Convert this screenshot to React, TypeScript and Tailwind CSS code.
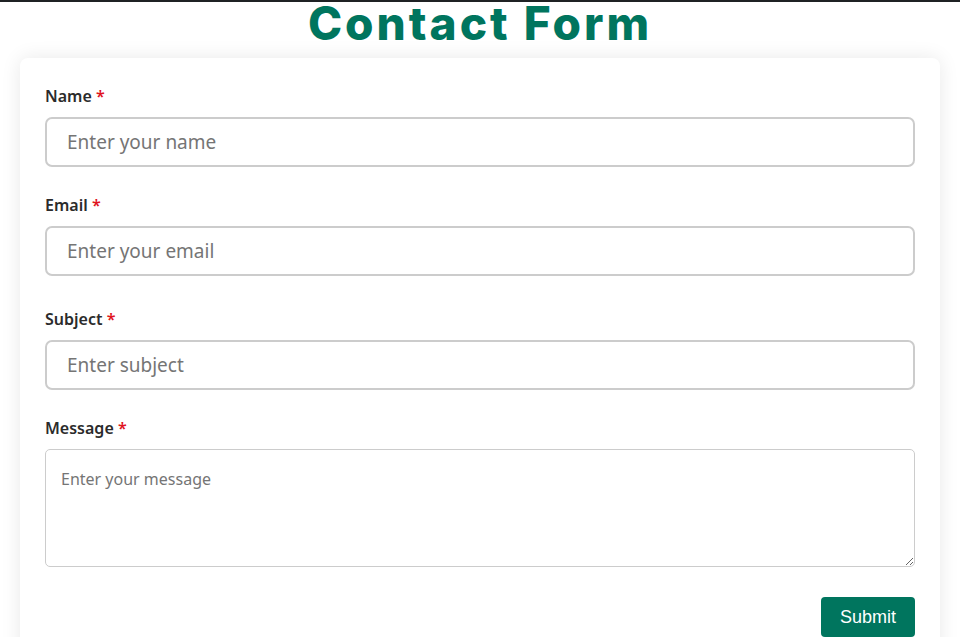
export default function App() {
  return (
    <div className="min-h-[637px] bg-white border-t-2 border-[#1f2224] font-['Noto_Sans',sans-serif]">
      <h1 className="text-center font-['Inter',sans-serif] font-extrabold text-[46px] leading-none tracking-[3px] text-[#00755e] h-[46px] -mt-[2px]">
        Contact Form
      </h1>
      <div className="mx-5 mt-[12px] mb-6 rounded-lg bg-white px-[25px] pt-[27px] pb-[25px] shadow-[0_0_20px_rgba(0,0,0,0.09)]">
        <Field label="Name" placeholder="Enter your name" />
        <div className="h-[27px]" />
        <Field label="Email" placeholder="Enter your email" />
        <div className="h-[32px]" />
        <Field label="Subject" placeholder="Enter subject" />
        <div className="h-[27px]" />
        <label className="block h-[22px] mb-[10px] text-[16px] leading-[22px] font-semibold text-[#2b2b2b]">
          Message <span className="text-[#e0141e]">*</span>
        </label>
        <textarea
          placeholder="Enter your message"
          className="block w-full h-[118px] rounded-[5px] border border-[#cccccc] px-[15px] pt-[19px] pb-[10px] text-[16px] leading-[20px] text-[#333] placeholder:text-[#757575] outline-none"
        />
        <div className="flex justify-end pt-[30px]">
          <button className="h-[40px] w-[94px] rounded-[4px] bg-[#00755e] text-white font-['Liberation_Sans',sans-serif] text-[18px] leading-none">
            Submit
          </button>
        </div>
      </div>
    </div>
  );
}

function Field({ label, placeholder }: { label: string; placeholder: string }) {
  return (
    <div>
      <label className="block h-[22px] mb-[10px] text-[16px] leading-[22px] font-semibold text-[#2b2b2b]">
        {label} <span className="text-[#e0141e]">*</span>
      </label>
      <input
        placeholder={placeholder}
        className="block w-full h-[50px] rounded-[7px] border-2 border-[#cccccc] px-[20px] text-[19px] text-[#333] placeholder:text-[#757575] outline-none"
      />
    </div>
  );
}
